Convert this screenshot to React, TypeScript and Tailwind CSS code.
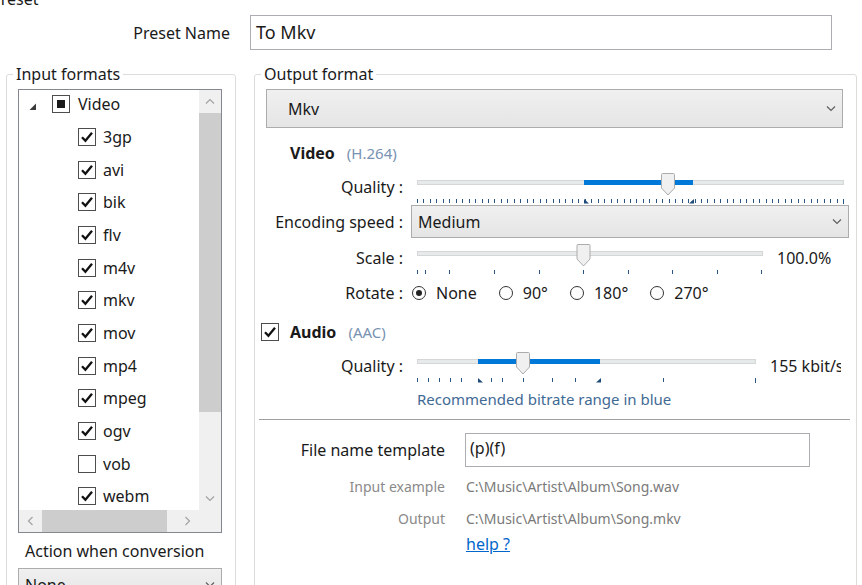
import React from 'react';

const FONT = "font-['Noto_Sans','Open_Sans',sans-serif]";

function Chevron({ className = '', dir = 'down' }: { className?: string; dir?: 'down' | 'up' | 'left' | 'right' }) {
  const paths: Record<string, string> = {
    down: 'M1 1.5 L5 5.5 L9 1.5',
    up: 'M1 5.5 L5 1.5 L9 5.5',
    left: 'M5.5 1 L1.5 5 L5.5 9',
    right: 'M1.5 1 L5.5 5 L1.5 9',
  };
  const vertical = dir === 'down' || dir === 'up';
  return (
    <svg
      className={className}
      width={vertical ? 10 : 7}
      height={vertical ? 7 : 10}
      viewBox={vertical ? '0 0 10 7' : '0 0 7 10'}
      fill="none"
      stroke="currentColor"
      strokeWidth={1.2}
    >
      <path d={paths[dir]} />
    </svg>
  );
}

function CheckBox({ state }: { state: 'on' | 'off' | 'partial' }) {
  return (
    <span className="flex h-[18px] w-[18px] shrink-0 items-center justify-center border border-[#4d4d4d] bg-white">
      {state === 'on' && (
        <svg width="14" height="14" viewBox="0 0 14 14" fill="none" stroke="#111" strokeWidth={2.3}>
          <path d="M2 7.2 L5.4 10.8 L12 2.8" />
        </svg>
      )}
      {state === 'partial' && <span className="h-[8px] w-[8px] bg-[#1a1a1a]" />}
    </span>
  );
}

function Radio({ checked }: { checked?: boolean }) {
  return (
    <span className="flex h-[14px] w-[14px] shrink-0 items-center justify-center rounded-full border border-[#333] bg-white">
      {checked && <span className="h-[6px] w-[6px] rounded-full bg-[#222]" />}
    </span>
  );
}

function Dropdown({ value, className = '' }: { value: string; className?: string }) {
  return (
    <div
      className={`flex items-center justify-between border border-[#acacac] bg-gradient-to-b from-[#f0f0f0] to-[#e5e5e5] text-[16px] text-[#1a1a1a] ${className}`}
    >
      <span>{value}</span>
      <Chevron className="mr-[6px] text-[#606060]" />
    </div>
  );
}

interface SliderProps {
  width: number;
  trackEnd: number;
  thumb: number;
  ticks: number[];
  sel?: [number, number];
}

// track starts at x=6 inside the svg
function Slider({ width, trackEnd, thumb, ticks, sel }: SliderProps) {
  return (
    <svg width={width} height={33} className="shrink-0">
      <rect x={6.5} y={8.5} width={trackEnd - 6} height={4} fill="#e7eaea" stroke="#d6d6d6" />
      {sel && <rect x={sel[0]} y={8} width={sel[1] - sel[0]} height={5} fill="#0078d7" />}
      {ticks.map((t) => (
        <rect key={t} x={Math.round(t)} y={27} width={1} height={t === trackEnd ? 5 : 4} fill="#2b5580" />
      ))}
      {sel && (
        <>
          <polygon points={`${sel[0]},27 ${sel[0]},31.5 ${sel[0] + 5},31.5`} fill="#1f4b78" />
          <polygon points={`${sel[1] + 1},27 ${sel[1] + 1},31.5 ${sel[1] - 4},31.5`} fill="#1f4b78" />
        </>
      )}
      <path
        d={`M${thumb - 6.5} 2.5 Q${thumb - 6.5} 1.5 ${thumb - 5.5} 1.5 L${thumb + 5.5} 1.5 Q${thumb + 6.5} 1.5 ${thumb + 6.5} 2.5 L${thumb + 6.5} 16 L${thumb} 23 L${thumb - 6.5} 16 Z`}
        fill="#f0f0f0"
        stroke="#acacac"
      />
    </svg>
  );
}

const videoTicks = Array.from({ length: 67 }, (_, i) => 6 + (i * 426) / 66);
const scaleTicks = [6, 14, 38, 83, 128, 172, 217, 261, 306, 350];
const audioTicks = [6, 17, 28, 39, 50, 80, 91, 112, 141, 164, 252, 344];

const formats: { name: string; on: boolean }[] = [
  { name: '3gp', on: true },
  { name: 'avi', on: true },
  { name: 'bik', on: true },
  { name: 'flv', on: true },
  { name: 'm4v', on: true },
  { name: 'mkv', on: true },
  { name: 'mov', on: true },
  { name: 'mp4', on: true },
  { name: 'mpeg', on: true },
  { name: 'ogv', on: true },
  { name: 'vob', on: false },
  { name: 'webm', on: true },
];

function FormatList() {
  return (
    <div className="ml-[11px] mt-[5px] flex h-[444px] w-[204px] flex-col border border-[#828790] bg-white">
      <div className="flex min-h-0 flex-1">
        <div className="min-w-0 flex-1 overflow-hidden">
          <div className="-mt-[2px]">
            <div className="flex h-[32.67px] items-center">
              <svg width="8" height="8" viewBox="0 0 8 8" className="ml-[10px] mt-[6px]">
                <polygon points="7,0.5 7,7 0.5,7" fill="#3c3c3c" />
              </svg>
              <span className="ml-[15px]">
                <CheckBox state="partial" />
              </span>
              <span className="ml-[8px] text-[16px]">Video</span>
            </div>
            {formats.map((f) => (
              <div key={f.name} className="flex h-[32.67px] items-center pl-[59px]">
                <CheckBox state={f.on ? 'on' : 'off'} />
                <span className="ml-[7px] text-[16px]">{f.name}</span>
              </div>
            ))}
          </div>
        </div>
        <div className="flex w-[22px] flex-col bg-[#f0f0f0]">
          <div className="flex h-[23px] items-center justify-center text-[#a3a3a3]">
            <Chevron dir="up" />
          </div>
          <div className="h-[299px] bg-[#cdcdcd]" />
          <div className="flex-1" />
          <div className="flex h-[23px] items-center justify-center text-[#a3a3a3]">
            <Chevron dir="down" />
          </div>
        </div>
      </div>
      <div className="flex h-[22px] bg-[#f0f0f0]">
        <div className="flex w-[23px] items-center justify-center text-[#a3a3a3]">
          <Chevron dir="left" />
        </div>
        <div className="w-[125px] bg-[#cdcdcd]" />
        <div className="flex-1" />
        <div className="flex w-[23px] items-center justify-center text-[#a3a3a3]">
          <Chevron dir="right" />
        </div>
        <div className="w-[22px]" />
      </div>
    </div>
  );
}

function FormLabel({ children, className = '' }: { children: React.ReactNode; className?: string }) {
  return <div className={`w-[142px] shrink-0 text-right text-[16px] leading-[20px] ${className}`}>{children}</div>;
}

export default function App() {
  return (
    <div className={`relative h-[585px] w-[862px] overflow-hidden bg-white text-[#1a1a1a] ${FONT}`}>
      <div className="-ml-[9px] -mt-[11px] h-[20px] text-[16px] leading-[20px]">Preset</div>

      <div className="mt-[6px] flex items-center">
        <div className="w-[230px] text-right text-[16px]">Preset Name</div>
        <div className="ml-[20px] flex h-[35px] w-[582px] items-center border border-[#abadb3] px-[5px] text-[18px]">
          To Mkv
        </div>
      </div>

      <div className="mt-[14px] flex items-start">
        {/* Input formats */}
        <fieldset className="ml-[6px] h-[560px] w-[230px] rounded-[3px] border border-[#dcdcdc]">
          <legend className="ml-[6px] px-[3px] text-[16px] leading-[20px]">Input formats</legend>
          <FormatList />
          <div className="ml-[18px] mt-[8px] text-[16px] leading-[20px]">Action when conversion</div>
          <Dropdown value="None" className="ml-[11px] mt-[7px] h-[33px] w-[204px] pl-[6px]" />
        </fieldset>

        {/* Output format */}
        <fieldset className="ml-[18px] h-[560px] w-[603px] rounded-[3px] border border-[#dcdcdc]">
          <legend className="ml-[6px] px-[3px] text-[16px] leading-[20px]">Output format</legend>
          <div className="pl-[6px]">
            <Dropdown value="Mkv" className="ml-[5px] mt-[5px] h-[39px] w-[577px] pl-[21px]" />

            <div className="mt-[12px] flex h-[26px] items-center pl-[29px]">
              <span className="text-[16px] font-bold">Video</span>
              <span className="ml-[12px] text-[15px] text-[#7892b2]">(H.264)</span>
            </div>

            <div className="mt-[6px] flex items-start">
              <FormLabel className="mt-[5px]">Quality :</FormLabel>
              <div className="ml-[8px]">
                <Slider width={440} trackEnd={432} thumb={257} ticks={videoTicks} sel={[173, 282]} />
              </div>
            </div>

            <div className="flex h-[33px] items-center">
              <FormLabel>Encoding speed :</FormLabel>
              <Dropdown value="Medium" className="ml-[8px] h-[33px] w-[438px] pl-[6px]" />
            </div>

            <div className="mt-[5px] flex items-start">
              <FormLabel className="mt-[5px]">Scale :</FormLabel>
              <div className="ml-[8px]">
                <Slider width={358} trackEnd={351} thumb={172.5} ticks={scaleTicks} />
              </div>
              <div className="ml-[8px] mt-[5px] text-[16px] leading-[20px]">100.0%</div>
            </div>

            <div className="mt-[5px] flex h-[24px] items-center">
              <FormLabel>Rotate :</FormLabel>
              <div className="ml-[9px] flex items-center text-[16px]">
                <Radio checked />
                <span className="ml-[10px]">None</span>
                <span className="ml-[22px]">
                  <Radio />
                </span>
                <span className="ml-[10px]">90°</span>
                <span className="ml-[22px]">
                  <Radio />
                </span>
                <span className="ml-[10px]">180°</span>
                <span className="ml-[22px]">
                  <Radio />
                </span>
                <span className="ml-[10px]">270°</span>
              </div>
            </div>

            <div className="mt-[15px] flex h-[24px] items-center">
              <CheckBox state="on" />
              <span className="ml-[11px] text-[16px] font-bold">Audio</span>
              <span className="ml-[12px] text-[15px] text-[#7892b2]">(AAC)</span>
            </div>

            <div className="mt-[7px] flex items-start">
              <FormLabel className="mt-[5px]">Quality :</FormLabel>
              <div className="ml-[8px]">
                <Slider width={352} trackEnd={344} thumb={112} ticks={audioTicks} sel={[67, 189]} />
              </div>
              <div className="ml-[7px] mt-[5px] w-[71px] overflow-hidden whitespace-nowrap text-[16px] leading-[20px]">
                155 kbit/s
              </div>
            </div>

            <div className="mt-[5px] flex h-[20px] items-center pl-[156px] text-[15px] text-[#3f6a94]">
              Recommended bitrate range in blue
            </div>

            <div className="-ml-[2px] mt-[10px] h-px w-[591px] bg-[#a0a0a0]" />

            <div className="mt-[13px] flex items-center">
              <div className="w-[184px] shrink-0 text-right text-[16px]">File name template</div>
              <div className="ml-[20px] flex h-[34px] w-[345px] items-start border border-[#abadb3] px-[4px] pt-[4px] text-[16px] leading-[20px]">
                (p)(f)
              </div>
            </div>

            <div className="mt-[10px] flex h-[18px] items-center text-[14px] text-[#8a8a8a]">
              <div className="w-[184px] shrink-0 text-right">Input example</div>
              <div className="ml-[21px] text-[#7a7a7a]">C:\Music\Artist\Album\Song.wav</div>
            </div>

            <div className="mt-[14px] flex h-[18px] items-center text-[14px] text-[#8a8a8a]">
              <div className="w-[184px] shrink-0 text-right">Output</div>
              <div className="ml-[21px] text-[#7a7a7a]">C:\Music\Artist\Album\Song.mkv</div>
            </div>

            <div className="mt-[7px] flex h-[20px] items-center pl-[205px] text-[16px]">
              <span className="text-[#0066cc] underline">help ?</span>
            </div>
          </div>
        </fieldset>
      </div>
    </div>
  );
}
